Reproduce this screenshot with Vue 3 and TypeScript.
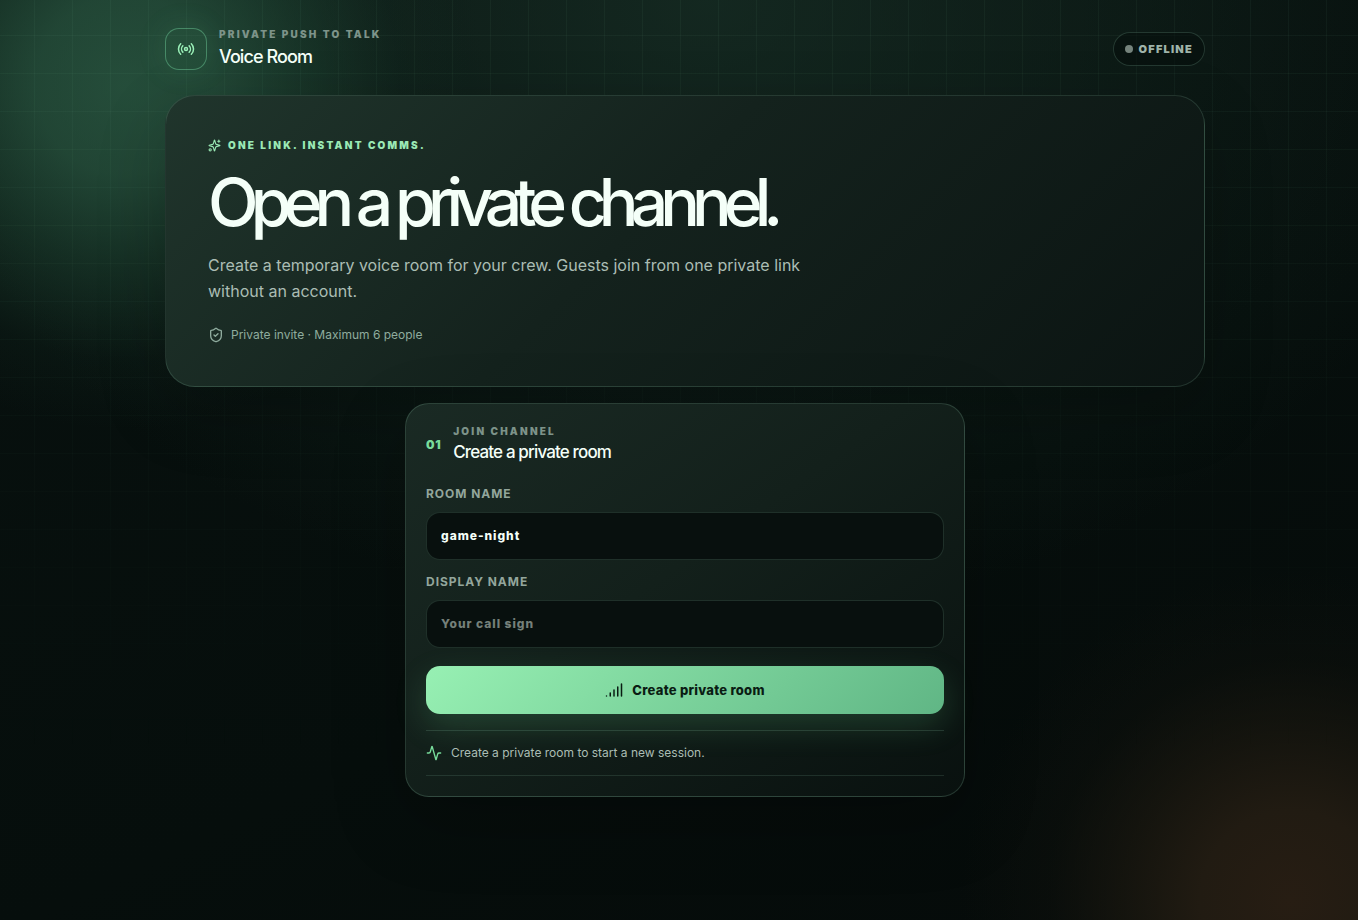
<script setup lang="ts">
import { ref } from 'vue'

const roomName = ref('game-night')
const displayName = ref('')
const status = ref('Create a private room to start a new session.')

function createRoom() {
  status.value = `Creating ${roomName.value || 'room'}…`
}
</script>

<template>
  <div class="page">
    <div class="grid-lines" aria-hidden="true"></div>
    <div class="shell">
      <header class="topbar">
        <div class="brand">
          <span class="brand-mark">
            <svg class="icon" width="18" height="18" viewBox="0 0 24 24" aria-hidden="true">
              <path d="M4.9 19.1C1 15.2 1 8.8 4.9 4.9" />
              <path d="M7.8 16.2c-2.3-2.3-2.3-6.1 0-8.5" />
              <circle cx="12" cy="12" r="2" />
              <path d="M16.2 7.8c2.3 2.3 2.3 6.1 0 8.5" />
              <path d="M19.1 4.9C23 8.8 23 15.1 19.1 19" />
            </svg>
          </span>
          <div>
            <p class="kicker">Private push to talk</p>
            <p class="title">Voice Room</p>
          </div>
        </div>
        <span class="badge"><i class="dot"></i>Offline</span>
      </header>

      <main>
        <section class="hero">
          <p class="tagline">
            <svg class="icon" width="13" height="13" viewBox="0 0 24 24" aria-hidden="true">
              <path d="M9.937 15.5A2 2 0 0 0 8.5 14.063l-6.135-1.582a.5.5 0 0 1 0-.962L8.5 9.936A2 2 0 0 0 9.937 8.5l1.582-6.135a.5.5 0 0 1 .963 0L14.063 8.5A2 2 0 0 0 15.5 9.937l6.135 1.581a.5.5 0 0 1 0 .964L15.5 14.063a2 2 0 0 0-1.437 1.437l-1.582 6.135a.5.5 0 0 1-.963 0z" />
              <path d="M20 2v4" />
              <path d="M22 4h-4" />
              <circle cx="4" cy="20" r="2" />
            </svg>
            One link. Instant comms.
          </p>
          <h1>Open a private channel.</h1>
          <p class="lead">
            Create a temporary voice room for your crew. Guests join from one private link without an account.
          </p>
          <p class="note">
            <svg class="icon" width="16" height="16" viewBox="0 0 24 24" aria-hidden="true">
              <path d="M20 13c0 5-3.5 7.5-7.66 8.95a1 1 0 0 1-.67-.01C7.5 20.5 4 18 4 13V6a1 1 0 0 1 1-1c2 0 4.5-1.2 6.24-2.72a1.17 1.17 0 0 1 1.52 0C14.51 3.81 17 5 19 5a1 1 0 0 1 1 1z" />
              <path d="m9 12 2 2 4-4" />
            </svg>
            Private invite · Maximum 6 people
          </p>
        </section>

        <form class="panel" @submit.prevent="createRoom">
          <div class="panel-head">
            <span class="step">01</span>
            <div>
              <p class="kicker">Join channel</p>
              <h2 class="title panel-title">Create a private room</h2>
            </div>
          </div>

          <label class="field-label" for="room">Room name</label>
          <input id="room" v-model="roomName" class="field" type="text" autocomplete="off" />

          <label class="field-label" for="name">Display name</label>
          <input id="name" v-model="displayName" class="field" type="text" placeholder="Your call sign" autocomplete="off" />

          <button class="submit" type="submit">
            <svg class="icon" width="18" height="18" viewBox="0 0 24 24" aria-hidden="true">
              <path d="M2 20h.01" />
              <path d="M7 20v-4" />
              <path d="M12 20v-8" />
              <path d="M17 20V8" />
              <path d="M22 4v16" />
            </svg>
            Create private room
          </button>

          <p class="status" role="status">
            <svg class="icon" width="16" height="16" viewBox="0 0 24 24" aria-hidden="true">
              <path d="M22 12h-2.48a2 2 0 0 0-1.93 1.46l-2.35 8.36a.25.25 0 0 1-.48 0L9.24 2.18a.25.25 0 0 0-.48 0l-2.35 8.36A2 2 0 0 1 4.49 12H2" />
            </svg>
            {{ status }}
          </p>
        </form>
      </main>
    </div>
  </div>
</template>

<style>
html,
body {
  margin: 0;
  background: #050909;
}
</style>

<style scoped>
.page {
  position: relative;
  isolation: isolate;
  box-sizing: border-box;
  min-height: 100vh;
  padding: 28px 20px 40px 32px;
  overflow: hidden;
  color: #f4fff8;
  font-family: Inter, "Liberation Sans", sans-serif;
  background:
    radial-gradient(circle at 125px 85px, rgba(44, 92, 69, 0.78) 0, rgba(42, 88, 66, 0.72) 90px, rgba(34, 76, 56, 0.48) 180px, rgba(24, 58, 43, 0.14) 275px, transparent 345px),
    radial-gradient(circle at calc(100% - 68px) calc(100% - 20px), #271d13 0, #211b12 90px, rgba(27, 24, 16, 0.7) 165px, rgba(20, 20, 14, 0.3) 240px, transparent 330px),
    radial-gradient(ellipse 800px 620px at 52% 0, rgba(25, 50, 40, 0.7), transparent),
    linear-gradient(155deg, #08110f 0%, #060e0c 60%, #050a09 100%);
}

.grid-lines {
  position: absolute;
  inset: 0;
  z-index: -1;
  background-image:
    linear-gradient(rgba(140, 220, 175, 0.05) 1px, transparent 1px),
    linear-gradient(90deg, rgba(140, 220, 175, 0.05) 1px, transparent 1px);
  background-position: -4px -3px;
  background-size: 38px 38px;
  -webkit-mask-image: linear-gradient(to bottom, #000, transparent 84%);
  mask-image: linear-gradient(to bottom, #000, transparent 84%);
}

.shell {
  max-width: 1040px;
  margin: 0 auto;
}

p,
h1,
h2 {
  margin: 0;
}

.icon {
  flex: none;
  fill: none;
  stroke: currentColor;
  stroke-width: 2;
  stroke-linecap: round;
  stroke-linejoin: round;
}

.topbar,
.brand,
.badge,
.tagline,
.note,
.panel-head,
.status {
  display: flex;
  align-items: center;
}

.topbar {
  justify-content: space-between;
  margin-bottom: 25px;
}

.brand {
  gap: 12px;
}

.brand-mark {
  display: grid;
  place-items: center;
  box-sizing: border-box;
  width: 42px;
  height: 42px;
  border: 1px solid rgba(120, 220, 165, 0.42);
  border-radius: 14px;
  color: #9af0b8;
  background: rgba(100, 220, 160, 0.04);
  box-shadow: 0 0 32px rgba(110, 230, 160, 0.1);
}

.kicker {
  color: #7d9389;
  font-size: 10px;
  font-weight: 900;
  line-height: 12px;
  letter-spacing: 0.22em;
  text-transform: uppercase;
}

.title {
  margin-top: 4px;
  font-size: 18px;
  font-weight: 500;
  line-height: 26px;
  letter-spacing: -0.05em;
}

.panel-title {
  margin-top: 3px;
  font-size: 17px;
  line-height: 24px;
}

.badge {
  box-sizing: border-box;
  gap: 6px;
  height: 34px;
  padding: 0 11px;
  border: 1px solid rgba(150, 210, 180, 0.2);
  border-radius: 17px;
  color: #9fb3a9;
  background: rgba(4, 12, 10, 0.5);
  font-size: 11px;
  font-weight: 900;
  letter-spacing: 0.11em;
  text-transform: uppercase;
}

.dot {
  width: 8px;
  height: 8px;
  border-radius: 50%;
  background: #75837c;
}

.hero {
  padding: 42px;
  border: 1px solid rgba(150, 210, 180, 0.17);
  border-radius: 30px;
  background: linear-gradient(135deg, #20352c 0%, #14221d 45%, #0b1412 100%);
  box-shadow: 0 24px 70px rgba(0, 0, 0, 0.2);
}

.tagline {
  gap: 7px;
  color: #9ae9b5;
  font-size: 10px;
  font-weight: 900;
  line-height: 14px;
  letter-spacing: 0.22em;
  text-transform: uppercase;
}

h1 {
  margin-top: 16px;
  font-size: 66px;
  font-weight: 500;
  line-height: 68px;
  letter-spacing: -0.12em;
}

.lead {
  max-width: 600px;
  margin-top: 16px;
  color: #abbdb4;
  font-size: 16px;
  line-height: 26px;
}

.note {
  gap: 7px;
  margin-top: 22px;
  color: #8fac9e;
  font-size: 12px;
  line-height: 18px;
}

.panel {
  box-sizing: border-box;
  max-width: 560px;
  margin: 16px auto 0;
  padding: 21px 20px 20px;
  border: 1px solid rgba(150, 210, 180, 0.2);
  border-radius: 24px;
  background: linear-gradient(145deg, #1a2a24 0%, #13201b 45%, #09110f 100%);
  box-shadow: 0 24px 70px rgba(0, 0, 0, 0.25);
}

.panel-head {
  gap: 12px;
  margin-bottom: 20px;
}

.step {
  color: #78dc9b;
  font-size: 12px;
  font-weight: 900;
  letter-spacing: 0.05em;
}

.field-label {
  display: block;
  margin-bottom: 8px;
  color: #93a69c;
  font-size: 12px;
  font-weight: 700;
  line-height: 20px;
  letter-spacing: 0.08em;
  text-transform: uppercase;
}

.field {
  box-sizing: border-box;
  display: block;
  width: 100%;
  height: 48px;
  margin-bottom: 12px;
  padding: 0 14px 2px;
  border: 1px solid rgba(150, 210, 180, 0.17);
  border-radius: 14px;
  outline: none;
  color: #f4fff8;
  background: #08100e;
  font-family: inherit;
  font-size: 12px;
  font-weight: 800;
  letter-spacing: 0.08em;
}

.field::placeholder {
  color: #75807a;
  opacity: 1;
}

.submit {
  display: flex;
  align-items: center;
  justify-content: center;
  gap: 9px;
  width: 100%;
  height: 48px;
  margin-top: 18px;
  padding: 0;
  border: 0;
  border-radius: 14px;
  color: #0a1c13;
  background: linear-gradient(135deg, #97f0b3, #60b685);
  box-shadow: 0 12px 32px rgba(110, 230, 150, 0.18);
  font-family: inherit;
  font-size: 13px;
  font-weight: 800;
  letter-spacing: 0.02em;
  cursor: pointer;
}

.status {
  gap: 9px;
  margin-top: 16px;
  padding: 13px 0;
  border-top: 1px solid rgba(150, 210, 180, 0.17);
  border-bottom: 1px solid rgba(150, 210, 180, 0.14);
  color: #abbdb4;
  font-size: 12px;
  line-height: 18px;
}

.status .icon {
  color: #78dc9b;
}

@media (max-width: 640px) {
  .page {
    padding: 20px;
  }

  .hero {
    padding: 28px;
  }

  h1 {
    font-size: 44px;
    line-height: 48px;
  }
}
</style>
